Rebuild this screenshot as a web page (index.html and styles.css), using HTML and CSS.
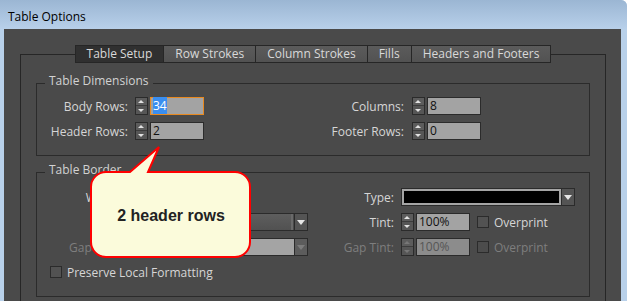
FILE: index.html
```html
<!DOCTYPE html>
<html lang="en">
<head>
  <meta charset="UTF-8">
  <title>Table Options</title>
  <link rel="stylesheet" href="styles.css">
</head>
<body>
<div class="window">
  <div class="titlebar">Table Options</div>

  <div class="panel">
    <div class="tabbox">
      <div class="tabs">
        <span class="tab active">Table Setup</span>
        <span class="tab">Row Strokes</span>
        <span class="tab">Column Strokes</span>
        <span class="tab">Fills</span>
        <span class="tab">Headers and Footers</span>
      </div>

      <div class="group dims">
        <span class="group-title">Table Dimensions</span>
        <div class="rows">
          <div class="row">
            <div class="field">
              <span class="lbl lbl-l">Body Rows:</span>
              <span class="spin"></span>
              <span class="num focus"><span class="sel">34</span></span>
            </div>
            <div class="field">
              <span class="lbl lbl-dr">Columns:</span>
              <span class="spin"></span>
              <span class="num">8</span>
            </div>
          </div>
          <div class="row">
            <div class="field">
              <span class="lbl lbl-l">Header Rows:</span>
              <span class="spin"></span>
              <span class="num">2</span>
            </div>
            <div class="field">
              <span class="lbl lbl-dr">Footer Rows:</span>
              <span class="spin"></span>
              <span class="num">0</span>
            </div>
          </div>
        </div>
      </div>

      <div class="group border">
        <span class="group-title">Table Border</span>
        <div class="rows">
          <div class="row">
            <div class="field">
              <span class="lbl lbl-l">Weight:</span>
              <span class="spin"></span>
              <span class="select weight"><span class="val">1 pt</span><span class="arrow"></span></span>
            </div>
            <div class="field">
              <span class="lbl lbl-br">Type:</span>
              <span class="select type"><span class="val"><span class="swatch"></span></span><span class="arrow"></span></span>
            </div>
          </div>
          <div class="row">
            <div class="field">
              <span class="lbl lbl-l">Color:</span>
              <span class="select color"><span class="val"></span><span class="arrow"></span></span>
            </div>
            <div class="field">
              <span class="lbl lbl-br">Tint:</span>
              <span class="spin"></span>
              <span class="num">100%</span>
              <span class="check"></span>
              <span class="check-text">Overprint</span>
            </div>
          </div>
          <div class="row disabled">
            <div class="field">
              <span class="lbl lbl-l">Gap Color:</span>
              <span class="select gap"><span class="val"></span><span class="arrow"></span></span>
            </div>
            <div class="field">
              <span class="lbl lbl-br">Gap Tint:</span>
              <span class="spin"></span>
              <span class="num">100%</span>
              <span class="check"></span>
              <span class="check-text">Overprint</span>
            </div>
          </div>
          <div class="row single">
            <div class="field preserve">
              <span class="check"></span>
              <span class="check-text">Preserve Local Formatting</span>
            </div>
          </div>
        </div>
      </div>
    </div>
  </div>

  <div class="callout">
    <svg class="callout-shape" width="166" height="116" viewBox="0 0 166 116">
      <path d="M18 28 H42 L71 3 L60 28 H147 A15 15 0 0 1 162 43 V98 A15 15 0 0 1 147 113 H18 A15 15 0 0 1 3 98 V43 A15 15 0 0 1 18 28 Z" fill="#fbfbdb" stroke="#ff0000" stroke-width="2"/>
    </svg>
    <span class="callout-text">2 header rows</span>
  </div>
</div>
</body>
</html>
```

FILE: styles.css
```css
body {
  margin: 0;
  background-color: #ffffff;
  font-family: 'Open Sans', 'Noto Sans', sans-serif;
  font-size: 11px;
}

.window {
  position: relative;
  width: 627px;
  height: 301px;
  background-color: #b9d1ea;
  border-top-right-radius: 6px;
  overflow: hidden;
  display: flex;
  flex-direction: column;
}

.titlebar {
  height: 29px;
  flex: none;
  box-sizing: border-box;
  padding: 4px 0 0 8px;
  display: flex;
  align-items: center;
  background: linear-gradient(#9bb6d3, #b8d0ea);
  color: #000000;
  font-size: 12px;
}

.panel {
  flex: 1;
  margin: 0 6px 0 4px;
  padding: 25px 15px 0 16px;
  background-color: #4a4a4a;
}

.tabbox {
  border: 1px solid #262626;
  padding: 0 15px;
  height: 260px;
}

.tabs {
  display: flex;
  justify-content: center;
  margin-top: -10px;
}

.tab {
  height: 18px;
  box-sizing: border-box;
  border: 1px solid #262626;
  padding: 0 11px;
  line-height: 16px;
  font-size: 12px;
  color: #d9d9d9;
  background: linear-gradient(#5b5b5b, #525252);
}

.tab + .tab {
  margin-left: -1px;
}

.tab.active {
  background: #303030;
}

.group {
  border: 1px solid #2b2b2b;
  margin-top: 20px;
  padding-bottom: 15px;
}

.group.border {
  margin-top: 16px;
}

.group-title {
  display: table;
  margin: -10px 0 9px 8px;
  padding: 0 4px;
  line-height: 14px;
  font-size: 12px;
  background-color: #4a4a4a;
  color: #d2d2d2;
}

.group.border .group-title {
  margin-bottom: 11px;
}

.rows {
  display: flex;
  flex-direction: column;
  gap: 7px;
}

.row {
  display: grid;
  grid-template-columns: 200px 1fr;
  height: 18px;
}

.group.border .row {
  grid-template-columns: 300px 1fr;
}

.field {
  display: flex;
  align-items: center;
}

.lbl {
  flex: none;
  text-align: right;
  margin-right: 7px;
  color: #d6d6d6;
  font-size: 12px;
}

.lbl-l {
  width: 91px;
}

.lbl-dr {
  width: 167px;
  margin-right: 8px;
}

.lbl-br {
  width: 57px;
}

.spin {
  position: relative;
  flex: none;
  width: 13px;
  height: 18px;
  box-sizing: border-box;
  margin-right: 2px;
  border: 1px solid #2b2b2b;
  background: linear-gradient(#5c5c5c 7px, #3c3c3c 7px, #3c3c3c 8px, #565656 8px);
}

.spin::before,
.spin::after {
  content: "";
  position: absolute;
  left: 2px;
  border-left: 3.5px solid transparent;
  border-right: 3.5px solid transparent;
}

.spin::before {
  top: 2px;
  border-bottom: 3px solid #e2e2e2;
}

.spin::after {
  bottom: 2px;
  border-top: 3px solid #e2e2e2;
}

.num {
  flex: none;
  width: 54px;
  height: 18px;
  box-sizing: border-box;
  padding-left: 2px;
  border: 1px solid #2b2b2b;
  background-color: #a3a3a3;
  color: #111111;
  font-size: 12px;
  line-height: 16px;
}

.num.focus {
  border-color: #e8891f;
}

.sel {
  background-color: #3a8ef0;
  color: #ffffff;
}

.check {
  flex: none;
  width: 12px;
  height: 12px;
  box-sizing: border-box;
  margin-left: 7px;
  border: 1px solid #2b2b2b;
  background-color: #525252;
}

.check-text {
  margin-left: 5px;
  color: #d6d6d6;
  font-size: 12px;
}

.select {
  flex: none;
  display: flex;
  height: 18px;
  box-sizing: border-box;
  border: 1px solid #2b2b2b;
}

.select .val {
  flex: 1;
  display: flex;
}

.select .arrow {
  position: relative;
  width: 12px;
  border-left: 1px solid #2b2b2b;
  background-color: #545454;
}

.select .arrow::after {
  content: "";
  position: absolute;
  left: 2px;
  top: 6px;
  border-left: 4px solid transparent;
  border-right: 4px solid transparent;
  border-top: 5px solid #e6e6e6;
}

.select.weight {
  width: 60px;
}

.select.weight .val {
  background-color: #a3a3a3;
  padding-left: 2px;
  line-height: 16px;
  color: #111111;
}

.select.color {
  width: 173px;
}

.select.color .val {
  background: linear-gradient(#5e5e5e, #515151);
  border-right: 2px solid #6a6a6a;
  margin-right: 1px;
}

.select.type {
  width: 174px;
}

.select.type .val {
  background-color: #a5a5a5;
  padding: 2px;
}

.swatch {
  flex: 1;
  background-color: #000000;
}

.select.gap {
  width: 173px;
}

.select.gap .val {
  background-color: #a4a4a4;
}

.select.gap .arrow {
  background-color: #5c5c5c;
}

.select.gap .arrow::after {
  border-top-color: #7c7c7c;
}

.disabled .lbl,
.disabled .check-text {
  color: #7e7e7e;
}

.disabled .num {
  background-color: #8c8c8c;
  color: #565656;
}

.disabled .spin::before,
.disabled .spin::after {
  border-top-color: #777777;
  border-bottom-color: #777777;
}

.disabled .spin::before {
  border-top-color: transparent;
}

.disabled .spin::after {
  border-bottom-color: transparent;
}

.disabled .check {
  background-color: #4c4c4c;
}

.preserve {
  padding-left: 13px;
}

.preserve .check {
  margin-left: 0;
}

.callout {
  position: absolute;
  left: 88px;
  top: 144px;
  width: 166px;
  height: 116px;
  box-sizing: border-box;
  padding-top: 28px;
  display: flex;
  align-items: center;
  justify-content: center;
}

.callout-shape {
  position: absolute;
  left: 0;
  top: 0;
}

.callout-text {
  position: relative;
  font-family: 'Liberation Sans', Arial, sans-serif;
  font-weight: bold;
  font-size: 16px;
  color: #222222;
}
```
